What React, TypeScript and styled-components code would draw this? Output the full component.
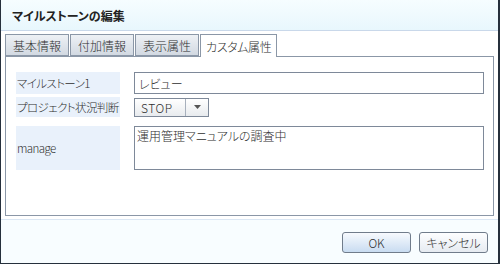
import styled, { createGlobalStyle } from "styled-components";

const GlobalStyle = createGlobalStyle`
  html, body {
    margin: 0;
    padding: 0;
  }
  body {
    font-family: "Noto Sans CJK JP", "Noto Sans", sans-serif;
    font-size: 12px;
    font-weight: 300;
    font-feature-settings: "palt";
    color: #2e2e2e;
  }
`;

const Dialog = styled.div`
  display: flex;
  flex-direction: column;
  width: 500px;
  height: 264px;
  box-sizing: border-box;
  border-left: 1px solid #26303c;
  border-right: 2px solid #26303c;
  border-bottom: 1px solid #26303c;
  background: #fff;
`;

const TitleBar = styled.div`
  display: flex;
  align-items: center;
  height: 30px;
  padding-left: 11px;
  background: linear-gradient(#f6fdff, #e8f7fd);
  border-bottom: 1px solid #c9d8ea;
  font-weight: bold;
  font-size: 12px;
  color: #222;
`;

const Body = styled.div`
  display: flex;
  flex-direction: column;
  padding: 3px 4px 3px 4px;
`;

const TabRow = styled.div`
  display: flex;
  align-items: flex-end;
  position: relative;
  z-index: 1;
`;

const Tab = styled.div<{ $active?: boolean }>`
  display: flex;
  align-items: center;
  height: ${(p) => (p.$active ? "22px" : "20px")};
  padding: ${(p) => (p.$active ? "0 5px" : "0 7px")};
  margin-right: ${(p) => (p.$active ? "0" : "1px")};
  margin-bottom: ${(p) => (p.$active ? "-1px" : "0")};
  border: 1px solid #8b97a7;
  border-bottom: ${(p) => (p.$active ? "none" : "1px solid #8b97a7")};
  background: ${(p) =>
    p.$active ? "#fff" : "linear-gradient(#eef1f5, #d2d9e2)"};
  font-size: 12px;
  white-space: nowrap;
  letter-spacing: ${(p) => (p.$active ? "-0.4px" : "0")};
`;

const Panel = styled.div`
  display: flex;
  flex-direction: column;
  height: 158px;
  border: 1px solid #8b97a7;
  padding: 0 9px 0 10px;
`;

const Row = styled.div<{ $top: number; $height: number }>`
  display: grid;
  grid-template-columns: 104px 1fr;
  column-gap: 14px;
  margin-top: ${(p) => p.$top}px;
  height: ${(p) => p.$height}px;
`;

const Label = styled.div`
  display: flex;
  align-items: center;
  padding-left: 1px;
  background: #e9f1fb;
  font-size: 11.5px;
  letter-spacing: -0.6px;
  white-space: nowrap;
`;

const TextInput = styled.div`
  display: flex;
  align-items: center;
  box-sizing: border-box;
  border: 1px solid #7e8999;
  padding-left: 4px;
  font-size: 12px;
`;

const TextArea = styled.div`
  box-sizing: border-box;
  border: 1px solid #7e8999;
  padding: 1px 2px;
  font-size: 12px;
  line-height: 15px;
`;

const SelectCell = styled.div`
  display: flex;
  align-items: center;
`;

const Select = styled.div`
  display: flex;
  height: 19px;
  box-sizing: border-box;
  border: 1px solid #7e8999;
  background: linear-gradient(#ffffff, #e8ebee);
`;

const SelectValue = styled.div`
  display: flex;
  align-items: center;
  width: 44px;
  padding-left: 6px;
  border-right: 1px solid #a7b0bc;
  font-size: 12px;
  letter-spacing: 0.5px;
`;

const SelectArrow = styled.div`
  display: flex;
  align-items: center;
  justify-content: center;
  width: 22px;
`;

const Footer = styled.div`
  flex: 1;
  display: flex;
  justify-content: flex-end;
  align-items: center;
  gap: 8px;
  padding-right: 10px;
  border-top: 1px solid #dbe7f4;
  background: #f8fdff;
`;

const Button = styled.button<{ $primary?: boolean }>`
  width: 69px;
  height: 21px;
  margin-top: 1px;
  padding: 0;
  border: 1px solid #707c8b;
  border-radius: 3px;
  background: ${(p) =>
    p.$primary
      ? "linear-gradient(#f7fafe, #c9dcf1)"
      : "linear-gradient(#fdfeff, #e6ebf1)"};
  font-family: inherit;
  font-weight: 300;
  font-feature-settings: "palt";
  font-size: 12px;
  color: #2e2e2e;
`;

export default function App() {
  return (
    <>
      <GlobalStyle />
      <Dialog>
        <TitleBar>マイルストーンの編集</TitleBar>
        <Body>
          <TabRow>
            <Tab>基本情報</Tab>
            <Tab>付加情報</Tab>
            <Tab>表示属性</Tab>
            <Tab $active>カスタム属性</Tab>
          </TabRow>
          <Panel>
            <Row $top={15} $height={22}>
              <Label>マイルストーン1</Label>
              <TextInput>レビュー</TextInput>
            </Row>
            <Row $top={3} $height={20}>
              <Label>プロジェクト状況判断</Label>
              <SelectCell>
                <Select>
                  <SelectValue>STOP</SelectValue>
                  <SelectArrow>
                    <svg width="7" height="4" viewBox="0 0 7 4">
                      <path d="M0 0h7L3.5 4z" fill="#555" />
                    </svg>
                  </SelectArrow>
                </Select>
              </SelectCell>
            </Row>
            <Row $top={9} $height={44}>
              <Label>manage</Label>
              <TextArea>運用管理マニュアルの調査中</TextArea>
            </Row>
          </Panel>
        </Body>
        <Footer>
          <Button $primary>OK</Button>
          <Button>キャンセル</Button>
        </Footer>
      </Dialog>
    </>
  );
}
